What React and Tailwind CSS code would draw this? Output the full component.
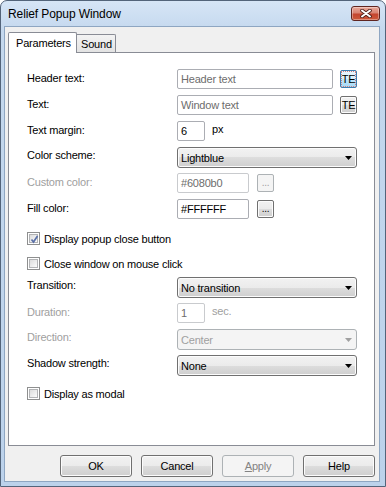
import React from "react";

const btnBg =
  "bg-[linear-gradient(#f2f2f2_0%,#ebebeb_50%,#dddddd_50%,#cfcfcf_100%)] shadow-[inset_0_0_0_1px_#fcfcfc]";

function Label({ children, disabled, combo }) {
  return (
    <div
      className={
        "w-[150px] shrink-0 leading-[14px] " +
        (combo ? "pt-[1px] " : "pt-[2px] ") +
        (disabled ? "text-[#a0a0a0]" : "text-black")
      }
    >
      {children}
    </div>
  );
}

function Arrow({ disabled }) {
  return (
    <svg width="7" height="4" viewBox="0 0 7 4" className="shrink-0">
      <polygon points="0,0 7,0 3.5,4" fill={disabled ? "#a0a0a0" : "#000"} />
    </svg>
  );
}

function Combo({ value, disabled }) {
  return (
    <div
      className={
        "w-[180px] h-[21px] rounded-[3px] border flex items-center pl-[3px] pr-[4px] " +
        (disabled
          ? "border-[#adb2b5] bg-[#f4f4f4] text-[#a0a0a0]"
          : "border-[#707070] text-black " + btnBg)
      }
    >
      <span className="flex-1 leading-[14px]">{value}</span>
      <Arrow disabled={disabled} />
    </div>
  );
}

function Check({ checked, label }) {
  return (
    <div className="h-[13px] flex items-center">
      <div className="w-[13px] h-[13px] border border-[#8e8f8f] bg-white p-[1px] shrink-0">
        <div className="w-full h-full border border-[#b2b3b5] bg-[linear-gradient(135deg,#dcdcdc,#fbfbfb)] relative">
          {checked && (
            <svg width="9" height="9" viewBox="0 0 9 9" className="absolute left-[0px] top-[0px]">
              <path d="M1.5 4.5 L3.5 7 L7.5 1" fill="none" stroke="#5a70a8" strokeWidth="1.7" />
            </svg>
          )}
        </div>
      </div>
      <span className="ml-[4px] leading-[14px]">{label}</span>
    </div>
  );
}

function TE({ focused }) {
  return (
    <div
      className={
        "ml-[7px] w-[17px] h-[18px] rounded-[2px] border flex items-center justify-center text-[11px] leading-none tracking-[-0.4px] " +
        (focused
          ? "border-[#3c7fb1] bg-[linear-gradient(#eaf6fd_0%,#d9f0fc_50%,#bee6fd_50%,#a7d9f5_100%)] outline-1 outline-dotted outline-[#d08080] outline-offset-[-2px]"
          : "border-[#707070] " + btnBg)
      }
    >
      TE
    </div>
  );
}

function Dots({ disabled }) {
  return (
    <div
      className={
        "ml-[8px] w-[17px] h-[18px] rounded-[2px] border flex items-end justify-center pb-[3px] leading-none text-[10px] " +
        (disabled
          ? "border-[#adb2b5] bg-[#f4f4f4] text-[#a0a0a0]"
          : "border-[#707070] text-black " + btnBg)
      }
    >
      ...
    </div>
  );
}

function Input({ w, children, placeholder, disabled }) {
  return (
    <div
      className={
        w +
        " h-[20px] border rounded-[2px] bg-white flex items-center pl-[3px] leading-[14px] " +
        (disabled ? "border-[#c9cbce] text-[#6d6d6d]" : "border-[#abadb3] text-black")
      }
    >
      {placeholder ? <span className="text-[#6d6d6d]">{placeholder}</span> : children}
    </div>
  );
}

function Button({ children, disabled }) {
  return (
    <div
      className={
        "w-[72px] h-[22px] rounded-[3px] border flex items-center justify-center leading-[14px] " +
        (disabled
          ? "border-[#adb2b5] bg-[#f4f4f4] text-[#838383]"
          : "border-[#707070] text-black " + btnBg)
      }
    >
      {children}
    </div>
  );
}

function CloseBtn() {
  return (
    <div className="w-[29px] h-[15px] rounded-[3px] border border-[#5f2520] bg-[linear-gradient(#e9a99b_0%,#d98473_45%,#c4452f_55%,#cd5a3c_100%)] shadow-[inset_0_0_0_1px_rgba(255,255,255,0.35)] flex items-center justify-center">
      <svg width="12" height="9" viewBox="0 0 12 9">
        <path d="M2 1.5 L10 7.5 M10 1.5 L2 7.5" stroke="#4b1d18" strokeWidth="3.6" strokeLinecap="round" />
        <path d="M2 1.5 L10 7.5 M10 1.5 L2 7.5" stroke="#ffffff" strokeWidth="2" strokeLinecap="round" />
      </svg>
    </div>
  );
}

export default function App() {
  return (
    <div className="w-[386px] h-[487px] font-['Liberation_Sans',Arial,sans-serif] text-[11px] tracking-[-0.2px] text-black">
      <div className="w-full h-full flex flex-col rounded-t-[7px] border border-[#53647a] bg-[linear-gradient(#d6e5f6,#c4d8ee_30px,#bcd2eb)]">
        <div className="h-[25px] shrink-0 flex items-center pl-[7px] pr-[5px]">
          <span className="flex-1 text-[12px] tracking-[-0.1px] text-black">Relief Popup Window</span>
          <CloseBtn />
        </div>
        <div className="ml-[3px] mr-[5px] h-[456px] border border-[#8ea6c2] bg-[#f0f0f0] flex flex-col">
          <div className="pt-[5px] pl-[3px]">
            <div className="h-[20px] flex items-end relative z-10">
              <div className="w-[69px] h-[21px] mb-[-1px] border border-b-0 border-[#898c95] bg-white rounded-t-[2px] pl-[7px] pt-[3px] leading-[14px]">
                Parameters
              </div>
              <div className="w-[39px] h-[18px] border border-l-0 border-b-0 border-[#898c95] bg-[linear-gradient(#f3f3f3,#e3e3e3)] rounded-tr-[2px] pl-[4px] pt-[2px] leading-[14px]">
                Sound
              </div>
            </div>
            <div className="w-[367px] h-[394px] border border-[#898c95] bg-white pt-[16px] pl-[18px]">
              <div className="flex">
                <Label>Header text:</Label>
                <div className="flex items-center">
                  <Input w="w-[156px]" placeholder="Header text" />
                  <TE focused />
                </div>
              </div>
              <div className="flex mt-[6px]">
                <Label>Text:</Label>
                <div className="flex items-center">
                  <Input w="w-[156px]" placeholder="Window text" />
                  <TE />
                </div>
              </div>
              <div className="flex mt-[6px]">
                <Label>Text margin:</Label>
                <Input w="w-[28px]">6</Input>
                <span className="ml-[7px] leading-[14px] pt-[1px]">px</span>
              </div>
              <div className="flex mt-[6px]">
                <Label combo>Color scheme:</Label>
                <Combo value="Lightblue" />
              </div>
              <div className="flex mt-[5px]">
                <Label disabled>Custom color:</Label>
                <div className="flex items-center">
                  <Input w="w-[72px]" disabled>#6080b0</Input>
                  <Dots disabled />
                </div>
              </div>
              <div className="flex mt-[6px]">
                <Label>Fill color:</Label>
                <div className="flex items-center">
                  <Input w="w-[72px]">#FFFFFF</Input>
                  <Dots />
                </div>
              </div>
              <div className="mt-[13px]">
                <Check checked label="Display popup close button" />
              </div>
              <div className="mt-[12px]">
                <Check label="Close window on mouse click" />
              </div>
              <div className="flex mt-[7px]">
                <Label combo>Transition:</Label>
                <Combo value="No transition" />
              </div>
              <div className="flex mt-[5px]">
                <Label disabled>Duration:</Label>
                <Input w="w-[28px]" disabled>1</Input>
                <span className="ml-[7px] leading-[14px] pt-[1px] text-[#a0a0a0]">sec.</span>
              </div>
              <div className="flex mt-[6px]">
                <Label combo disabled>Direction:</Label>
                <Combo value="Center" disabled />
              </div>
              <div className="flex mt-[5px]">
                <Label combo>Shadow strength:</Label>
                <Combo value="None" />
              </div>
              <div className="mt-[11px]">
                <Check label="Display as modal" />
              </div>
            </div>
          </div>
          <div className="mt-[9px] pl-[55px] flex gap-[9px]">
            <Button>OK</Button>
            <Button>Cancel</Button>
            <Button disabled>
              <span>
                <span className="underline">A</span>pply
              </span>
            </Button>
            <Button>Help</Button>
          </div>
        </div>
      </div>
    </div>
  );
}
